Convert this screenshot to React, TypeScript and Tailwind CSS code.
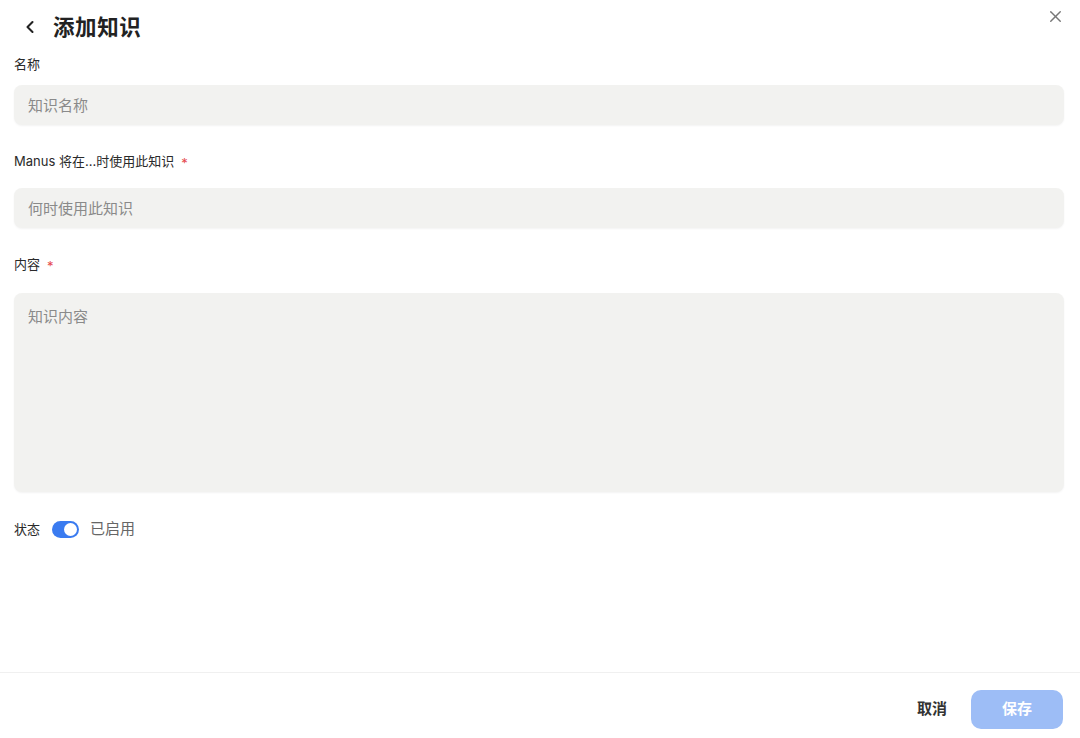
import { useState } from "react";
import { ChevronLeft, X } from "lucide-react";

const font = { fontFamily: '"Inter", "Noto Sans CJK SC", sans-serif' };

const Label = ({ text, required }: { text: string; required?: boolean }) => (
  <div className="flex items-center h-5 text-[13px] text-[#2a2a2a]">
    <span>{text}</span>
    {required && <span className="ml-[7px] text-[#e5484d] text-[13px] leading-none mt-[3px]">*</span>}
  </div>
);

export default function App() {
  const [enabled, setEnabled] = useState(true);

  return (
    <div className="w-[1080px] h-[738px] bg-white flex flex-col text-[#222]" style={font}>
      <div className="flex justify-between pl-[20px] pr-[15px] h-[55px]">
        <div className="flex items-center gap-[13px] h-[54px]">
          <ChevronLeft size={20} strokeWidth={2.5} className="text-[#222]" />
          <h1 className="text-[21.5px] font-bold text-[#222] tracking-[0.6px]">添加知识</h1>
        </div>
        <button className="mt-[6px] h-5 text-[#777]">
          <X size={19} strokeWidth={1.8} />
        </button>
      </div>

      <div className="flex-1 px-[14px] pr-[16px]">
        <Label text="名称" />
        <input
          placeholder="知识名称"
          className="mt-[10px] w-full h-[40px] rounded-[8px] bg-[#f2f2f0] px-[14px] text-[15px] placeholder:text-[#8a8a8a] outline-none shadow-[0_1px_2px_rgba(0,0,0,0.05)]"
        />

        <div className="mt-[27px]">
          <Label text="Manus 将在...时使用此知识" required />
        </div>
        <input
          placeholder="何时使用此知识"
          className="mt-[16px] w-full h-[40px] rounded-[8px] bg-[#f2f2f0] px-[14px] text-[15px] placeholder:text-[#8a8a8a] outline-none shadow-[0_1px_2px_rgba(0,0,0,0.05)]"
        />

        <div className="mt-[27px]">
          <Label text="内容" required />
        </div>
        <textarea
          placeholder="知识内容"
          className="mt-[18px] block w-full h-[199px] rounded-[8px] bg-[#f2f2f0] px-[14px] pt-[13px] text-[15px] placeholder:text-[#8a8a8a] outline-none resize-none shadow-[0_1px_2px_rgba(0,0,0,0.05)]"
        />

        <div className="mt-[26px] flex items-center gap-[11px]">
          <span className="text-[13px] text-[#2a2a2a]">状态</span>
          <button
            onClick={() => setEnabled(!enabled)}
            className={`ml-[1px] w-[27px] h-[17px] rounded-full p-[2px] flex items-center ${enabled ? "bg-[#3a7bf0] justify-end" : "bg-[#d4d4d4] justify-start"}`}
          >
            <span className="w-[13px] h-[13px] rounded-full bg-white" />
          </button>
          <span className="text-[15px] text-[#666]">已启用</span>
        </div>
      </div>

      <div className="border-t border-[#f0f0f0] h-[66px] flex items-start pt-[17px] justify-end gap-[24px] pr-[17px]">
        <button className="h-[39px] text-[15px] font-bold text-[#333]">取消</button>
        <button className="w-[92px] h-[39px] rounded-[10px] bg-[#9dbdf6] text-white text-[15px] font-bold">
          保存
        </button>
      </div>
    </div>
  );
}
